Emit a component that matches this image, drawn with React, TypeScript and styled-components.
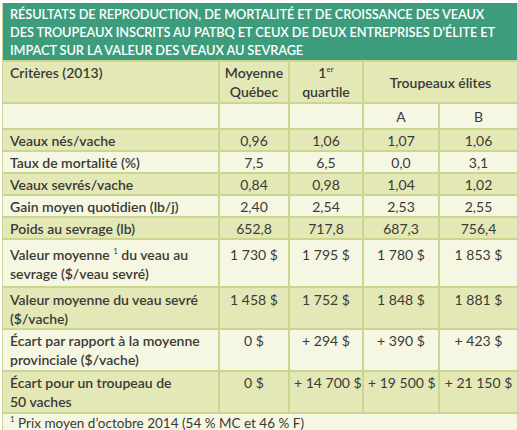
import styled, { createGlobalStyle } from "styled-components";

const GlobalStyle = createGlobalStyle`
  body {
    margin: 0;
    background: #ffffff;
  }
`;

const Frame = styled.div`
  width: 514px;
  margin: 3px 0 0 2px;
  font-family: Lato, "Open Sans", "Liberation Sans", sans-serif;
  color: #3a3a36;
  border: 1px solid #cdd796;
  border-top: none;
`;

const Title = styled.div`
  background: #3d9c7c;
  color: #ffffff;
  font-weight: 600;
  font-size: 12.8px;
  letter-spacing: -0.1px;
  line-height: 18px;
  padding: 2px 7px 1px;
  white-space: nowrap;
`;

const Table = styled.table`
  width: 100%;
  border-collapse: collapse;
  table-layout: fixed;
  font-size: 14px;
  line-height: 19px;
`;

const Row = styled.tr<{ $shade: "dark" | "light" }>`
  background: ${({ $shade }) => ($shade === "dark" ? "#e4e8b6" : "#f6f7e2")};
`;

const Cell = styled.td<{ $top?: number; $bottom?: number }>`
  border: 2px solid #cbd68f;
  padding: ${({ $top }) => $top ?? 1}px 4px ${({ $bottom }) => $bottom ?? 0}px;
  text-align: center;
  vertical-align: top;
  white-space: nowrap;
  &:first-child {
    border-left: none;
  }
  &:last-child {
    border-right: none;
  }
`;

const Label = styled(Cell)`
  text-align: left;
  font-weight: 600;
  padding-left: 7px;
`;

const HeadCell = styled(Cell)<{ $middle?: boolean }>`
  font-weight: 600;
  vertical-align: ${({ $middle }) => ($middle ? "middle" : "top")};
`;

const HeadLabel = styled(HeadCell)`
  text-align: left;
  padding-left: 7px;
`;

const Sup = styled.span`
  font-size: 8px;
  line-height: 0;
  position: relative;
  top: -6px;
  font-weight: 400;
`;

const Note = styled.td`
  border-top: 2px solid #cbd68f;
  padding: 1px 7px 0;
  font-size: 13.5px;
  line-height: 16px;
  text-align: left;
`;

type DataRow = {
  label: React.ReactNode;
  values: string[];
  pad?: [number, number];
};

const rows: DataRow[] = [
  { label: "Veaux nés/vache", values: ["0,96", "1,06", "1,07", "1,06"] },
  { label: "Taux de mortalité (%)", values: ["7,5", "6,5", "0,0", "3,1"] },
  { label: "Veaux sevrés/vache", values: ["0,84", "0,98", "1,04", "1,02"] },
  { label: "Gain moyen quotidien (lb/j)", values: ["2,40", "2,54", "2,53", "2,55"] },
  { label: "Poids au sevrage (lb)", values: ["652,8", "717,8", "687,3", "756,4"] },
  {
    label: (
      <>
        Valeur moyenne <Sup>1</Sup> du veau au
        <br />
        sevrage ($/veau sevré)
      </>
    ),
    values: ["1 730 $", "1 795 $", "1 780 $", "1 853 $"],
    pad: [5, 3],
  },
  {
    label: (
      <>
        Valeur moyenne du veau sevré
        <br />
        ($/vache)
      </>
    ),
    values: ["1 458 $", "1 752 $", "1 848 $", "1 881 $"],
    pad: [2, 0],
  },
  {
    label: (
      <>
        Écart par rapport à la moyenne
        <br />
        provinciale ($/vache)
      </>
    ),
    values: ["0 $", "+ 294 $", "+ 390 $", "+ 423 $"],
    pad: [1, 1],
  },
  {
    label: (
      <>
        Écart pour un troupeau de
        <br />
        50 vaches
      </>
    ),
    values: ["0 $", "+ 14 700 $", "+ 19 500 $", "+ 21 150 $"],
    pad: [1, 1],
  },
];

export default function App() {
  return (
    <>
      <GlobalStyle />
      <Frame>
        <Title>
          RÉSULTATS DE REPRODUCTION, DE MORTALITÉ ET DE CROISSANCE DES VEAUX
          <br />
          DES TROUPEAUX INSCRITS AU PATBQ ET CEUX DE DEUX ENTREPRISES D’ÉLITE ET
          <br />
          IMPACT SUR LA VALEUR DES VEAUX AU SEVRAGE
        </Title>
        <Table>
          <colgroup>
            <col style={{ width: 216 }} />
            <col style={{ width: 70 }} />
            <col style={{ width: 74 }} />
            <col style={{ width: 76 }} />
            <col />
          </colgroup>
          <tbody>
            <Row $shade="dark">
              <HeadLabel $top={1} $bottom={1}>
                Critères (2013)
              </HeadLabel>
              <HeadCell $top={1} $bottom={1}>
                Moyenne
                <br />
                Québec
              </HeadCell>
              <HeadCell $top={1} $bottom={1}>
                1<Sup>er</Sup>
                <br />
                quartile
              </HeadCell>
              <HeadCell colSpan={2} $middle>
                Troupeaux élites
              </HeadCell>
            </Row>
            <Row $shade="light">
              <Cell $top={3} $bottom={2} />
              <Cell $top={3} $bottom={2} />
              <Cell $top={3} $bottom={2} />
              <Cell $top={3} $bottom={2}>
                A
              </Cell>
              <Cell $top={3} $bottom={2}>
                B
              </Cell>
            </Row>
            {rows.map((r, i) => {
              const [top, bottom] = r.pad ?? [1, 0];
              return (
                <Row key={i} $shade={i % 2 === 0 ? "dark" : "light"}>
                  <Label $top={top} $bottom={bottom}>
                    {r.label}
                  </Label>
                  {r.values.map((v, j) => (
                    <Cell key={j} $top={top} $bottom={bottom}>
                      {v}
                    </Cell>
                  ))}
                </Row>
              );
            })}
            <Row $shade="light">
              <Note colSpan={5}>
                <Sup>1</Sup> Prix moyen d’octobre 2014 (54 % MC et 46 % F)
              </Note>
            </Row>
          </tbody>
        </Table>
      </Frame>
    </>
  );
}
